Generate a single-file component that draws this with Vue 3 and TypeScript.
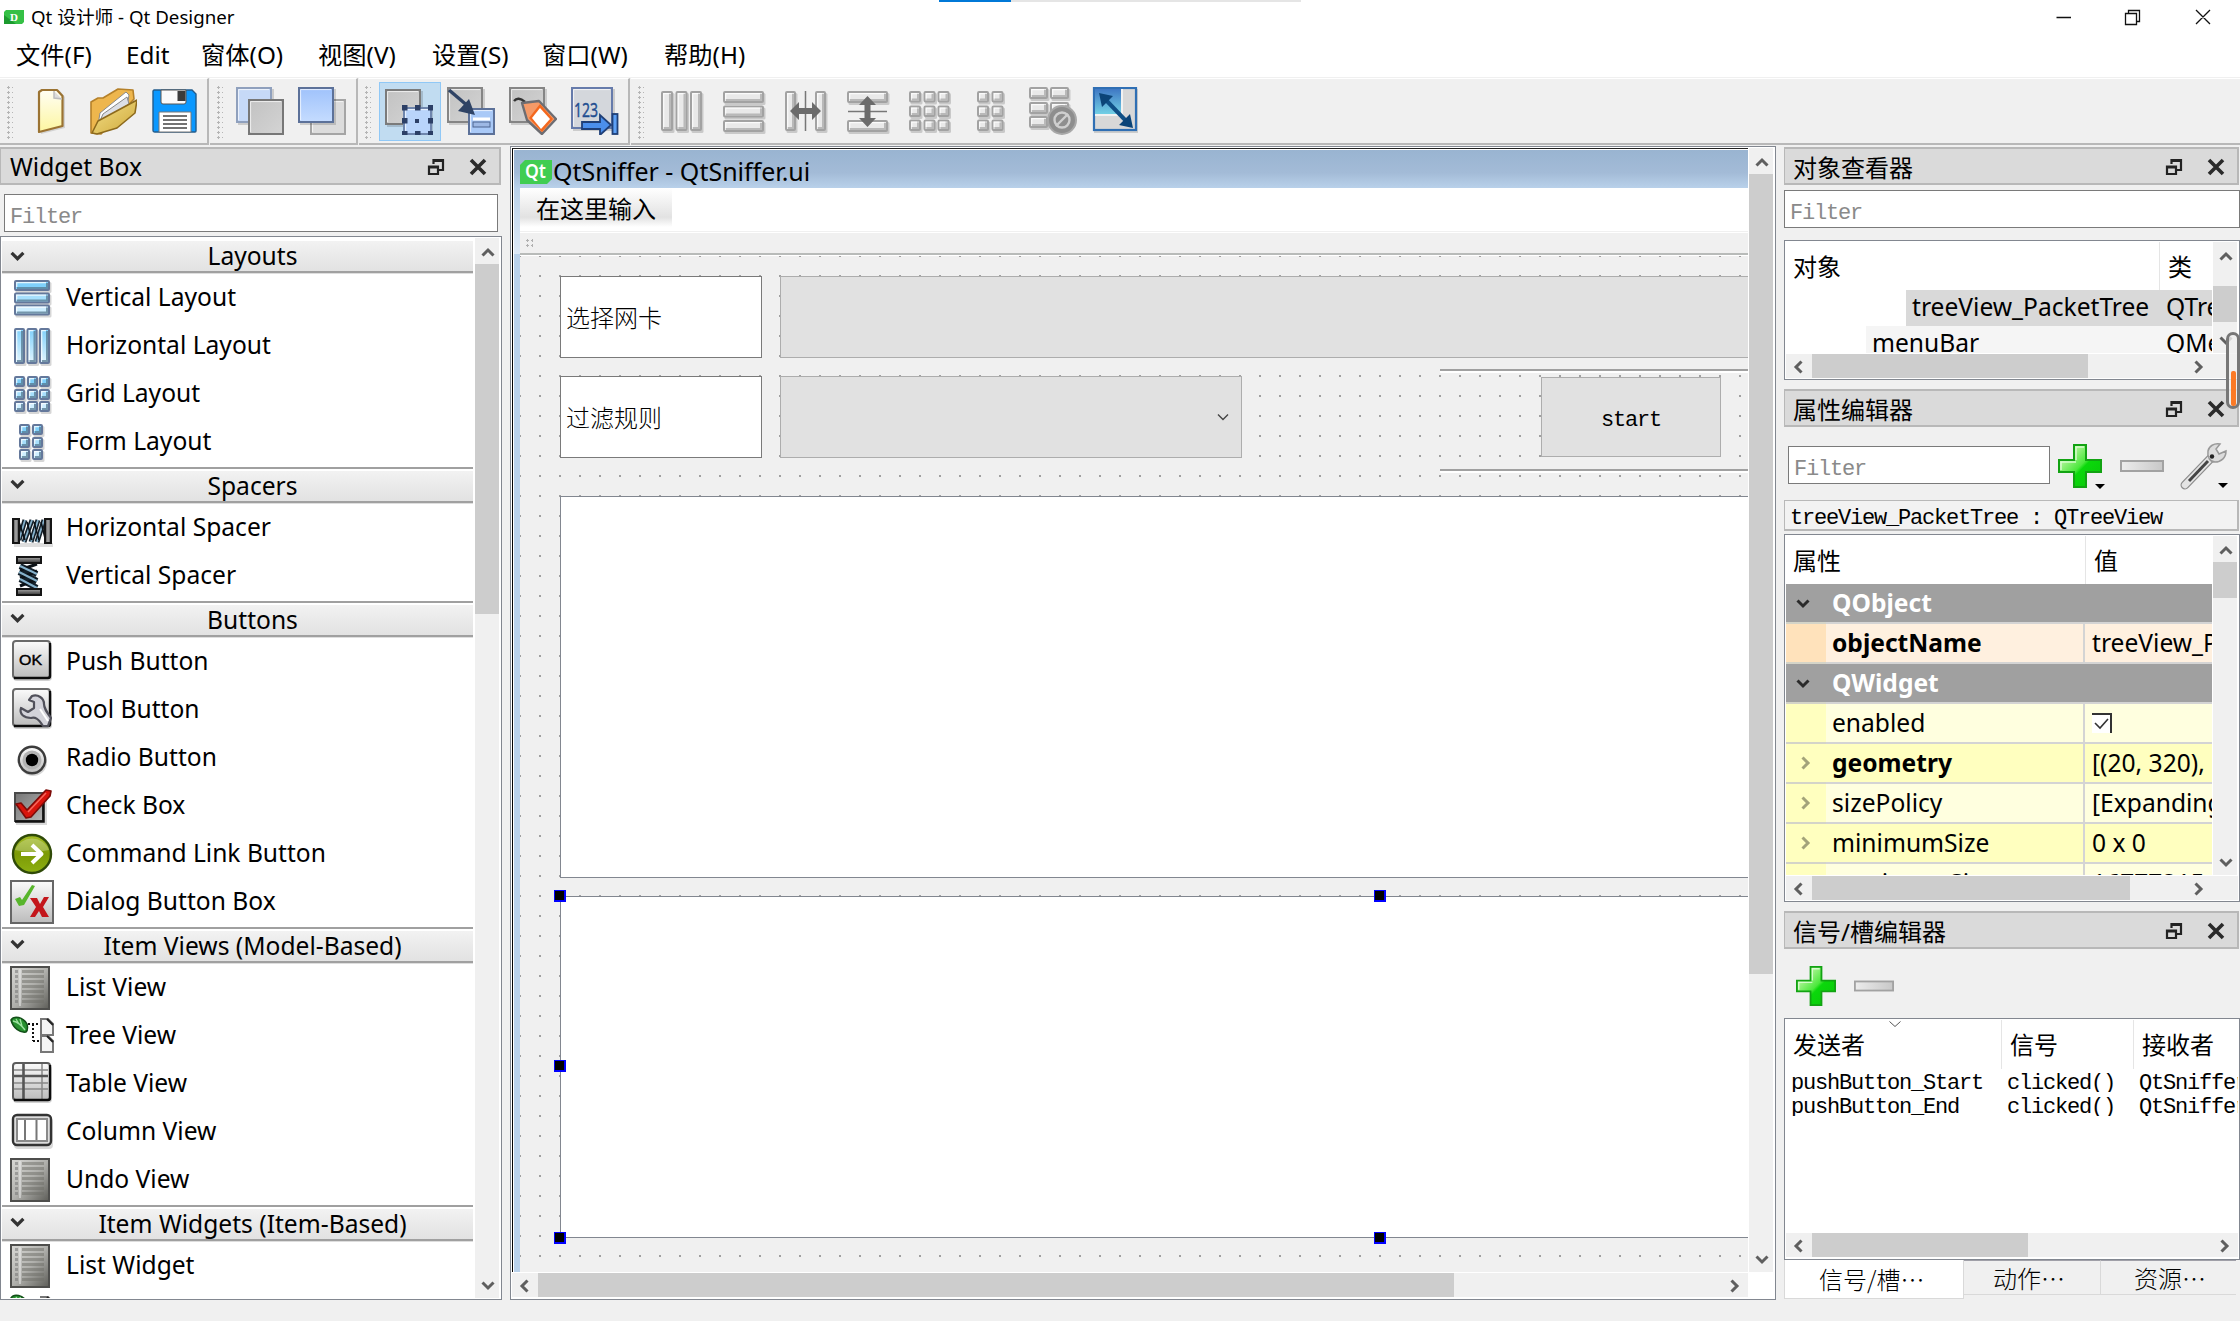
<script setup lang="ts">
import { h } from 'vue'

type Art = string

/* ---------- shared drawing helpers ---------- */
function cell(x: number, y: number, w: number, hh: number, fill: string, line: string, shade: string): Art {
  return `<rect x="${x + 1.5}" y="${y + 2}" width="${w}" height="${hh}" rx="1.5" fill="#000" opacity=".16"/>
<rect x="${x + 1}" y="${y + 1}" width="${w - 2}" height="${hh - 2}" rx="1" fill="${fill}" stroke="${line}" stroke-width="2"/>
<path d="M${x + 3} ${y + hh - 3}H${x + w - 3}V${y + 3}" fill="none" stroke="${shade}" stroke-width="2" opacity=".75"/>
<path d="M${x + 2.7} ${y + hh - 4}V${y + 2.7}H${x + w - 4}" fill="none" stroke="#fff" stroke-width="1.2" opacity=".8"/>`
}
const blue = ['#7fd0fb', '#a6dffc', '#cdeeff']
const bc = (x: number, y: number, w: number, hh: number, f: string) => cell(x, y, w, hh, f, '#64789b', '#55788f')
const gc = (x: number, y: number, w: number, hh: number) => cell(x, y, w, hh, '#e9e9e9', '#a2a2a2', '#a8a8a8')

const grid3 = (x0: number[], f: (x: number, y: number, i: number) => Art, y0: number[]) =>
  y0.map((y, i) => x0.map((x) => f(x, y, i)).join('')).join('')

const plate = (x: number, y: number, w: number, hh: number, fill: string, line: string) =>
  `<rect x="${x + 2}" y="${y + 2}" width="${w}" height="${hh}" fill="#000" opacity=".15"/>
<rect x="${x + 1}" y="${y + 1}" width="${w - 2}" height="${hh - 2}" fill="${fill}" stroke="${line}" stroke-width="2"/>
<path d="M${x + 2.6} ${y + hh - 3}V${y + 2.6}H${x + w - 3}" fill="none" stroke="#fff" opacity=".7"/>`

const listArt: Art = `<rect x="1" y="1" width="38" height="42" fill="url(#gList)" stroke="#4e4e4c" stroke-width="2"/>
${[5, 10, 15, 20, 25, 30, 35].map((y) => `<rect x="12" y="${y - 1}" width="22" height="3" fill="#6d6d68" opacity=".5"/><rect x="5" y="${y - 1}" width="3" height="3" fill="#777" opacity=".55"/>`).join('')}
<path d="M10 3V40" stroke="#eee" stroke-width="1.4" opacity=".7"/>`

const page = (y: number) => `<path d="M31 ${y}H38L43 ${y + 5}V${y + 16}H31Z" fill="#f4f4f4" stroke="#777" stroke-width="2"/><path d="M37 ${y}L43 ${y + 6}" stroke="#222" stroke-width="2"/>`
const treeArt: Art = `<path d="M1 6C4 1 13 3 17 10C18 14 18 16 16 18C10 19 3 14 1 6Z" fill="#27912f" stroke="#124f18" stroke-width="1.5"/>
<path d="M3 7C8 8 12 12 15 16M6 5L9 10M10 5L12 12" stroke="#9de2a0" stroke-width="1.3" fill="none"/>
<path d="M18 10H29M23 10V27M23 27H29" stroke="#111" stroke-width="2" stroke-dasharray="2 2" fill="none"/>${page(5)}${page(22)}`

const coil = `<path d="M9 34L15 14M14 36L22 14M21 36L28 14M27 36L34 14" stroke="#14212b" stroke-width="5"/><path d="M9 34L15 14M14 36L22 14M21 36L28 14M27 36L34 14" stroke="#86b2cc" stroke-width="1.8"/><path d="M9 16L15 34M17 16L22 34M24 16L29 34M31 16L35 32" stroke="#0c1217" stroke-width="1.6"/>`
const springArt: Art = `<rect x="4" y="37" width="39" height="4" fill="#000" opacity=".13"/>${coil}<rect x="3" y="13" width="6" height="24" fill="url(#gMet)" stroke="#151515" stroke-width="2"/><rect x="35" y="13" width="6" height="24" fill="url(#gMet)" stroke="#151515" stroke-width="2"/>`
const vspringArt: Art = `<path d="M10 12L27 20M9 18L27 27M10 25L27 34" stroke="#14212b" stroke-width="6"/><path d="M27 10L10 16M27 17L10 24M27 25L10 32" stroke="#0c1217" stroke-width="3"/><path d="M10 12L27 20M9 18L27 27M10 25L27 34" stroke="#86b2cc" stroke-width="2"/><rect x="7" y="3" width="24" height="6" fill="url(#gMetV)" stroke="#151515" stroke-width="2"/><rect x="7" y="35" width="24" height="6" fill="url(#gMetV)" stroke="#151515" stroke-width="2"/>`

const key = `<rect x="3" y="3" width="39" height="38" rx="4" fill="#000" opacity=".18"/><rect x="3" y="1" width="37" height="37" rx="3" fill="url(#gKey)" stroke="#6a6a6a" stroke-width="2"/><path d="M4 38H38Q40 38 40 36V3" fill="none" stroke="#0c0c0c" stroke-width="2.4"/>`

const art: Record<string, Art> = {
  vlay: [4, 16.5, 28.5].map((y, i) => bc(4, y, 36, 11, blue[i])).join(''),
  hlay: [4, 16.5, 29].map((x) => bc(x, 4, 11, 36, 'url(#gBlueV)')).join(''),
  glay: grid3([4, 17, 29], (x, y, i) => bc(x, y, 11, 11, blue[i]), [4, 17, 29]),
  flay: grid3([9, 22], (x, y, i) => bc(x, y, 11, 11, blue[i]), [4, 17, 29]),
  hspace: springArt,
  vspace: vspringArt,
  push: key + `<text x="20.5" y="25" font-size="14" font-family="Liberation Sans, sans-serif" text-anchor="middle" textLength="23" lengthAdjust="spacingAndGlyphs" fill="#000" stroke="#000" stroke-width=".4">OK</text>`,
  tool: key + `<path d="M22 8C28 6 34 10 34 16C34 20 36 23 41 30L38 38L33 38C28 30 25 29 21 30C14 30 9 26 11 20L18 24L24 20L24 14L19 12Z" fill="#d3d3da" stroke="#50505a" stroke-width="2.2" stroke-linejoin="round"/><path d="M30 21L38 33" stroke="#fff" stroke-width="2"/>`,
  radio: `<circle cx="23" cy="26" r="14" fill="#000" opacity=".16"/><circle cx="22" cy="24" r="13.2" fill="url(#gKey)" stroke="#3c3c3c" stroke-width="2.4"/><circle cx="22" cy="24" r="9.5" fill="#b3b3b3"/><circle cx="22" cy="24" r="6.2" fill="#000"/>`,
  check: `<rect x="6" y="11" width="31" height="30" fill="#000" opacity=".15"/><rect x="5" y="9" width="28" height="28" fill="url(#gDark)" stroke="#4a4a4a" stroke-width="2"/><path d="M5 37.5H33.500V14" fill="none" stroke="#111" stroke-width="2.500"/><path d="M6 20L11 19L17 26L36 6L41 7L40 12L21 33L16 34Z" fill="#d8140c" stroke="#7d0b08" stroke-width="1.6" stroke-linejoin="round"/><path d="M18 28L36 9" stroke="#f6675c" stroke-width="1.500"/>`,
  cmd: `<circle cx="22" cy="22" r="19" fill="url(#gGreen)" stroke="#2f4a08" stroke-width="2.4"/><path d="M5 18A18 17 0 0 1 39 18Q22 22 5 18Z" fill="#fff" opacity=".25"/><path d="M11 22H30M22 13L31.500 22L22 31" fill="none" stroke="#fff" stroke-width="4" stroke-linejoin="round"/>`,
  dlg: `<rect x="1" y="1" width="42" height="42" fill="url(#gKey)" stroke="#666" stroke-width="2"/><path d="M5 19L10 17L12 20L22 5L25 6L14 25L9 26Z" fill="#58b52c"/><path d="M20 18H27L30 24L34 17H39L33 27L39 37H32L29 31L25 37H20L26 27Z" fill="#c3161b"/>`,
  list: listArt,
  tree: treeArt,
  table: `<rect x="3" y="3" width="39" height="38" rx="4" fill="#000" opacity=".18"/><rect x="3" y="1" width="37" height="37" rx="3" fill="url(#gKey)" stroke="#5c5c5c" stroke-width="2"/><path d="M4 8H38M4 21H38M4 27H38M32 2V37" stroke="#888" stroke-width="1.500"/><path d="M4 14H38M13.500 2V37" stroke="#555" stroke-width="2.600"/><path d="M4 38H38Q40 38 40 36V3" fill="none" stroke="#0c0c0c" stroke-width="2.400"/>`,
  column: `<rect x="4" y="8" width="39" height="31" rx="4" fill="#000" opacity=".15"/><rect x="3" y="5" width="38" height="30" rx="4" fill="#ddd" stroke="#333" stroke-width="2.400"/><rect x="7" y="9" width="30" height="22" fill="#fff" stroke="#8a8a8a" stroke-width="2"/><path d="M15 10V30M26.500 10V30" stroke="#777" stroke-width="2"/>`,
}

const g = { f: 'url(#gPlate)', l: '#7d7d7d' }
const tb: Record<string, Art> = {
  fresh: `<path d="M13 4H33L38 10V41L14 47Z" fill="#000" opacity=".12"/><path d="M12 5L15 3H30L35.500 9V39L12 45Z" fill="url(#gPaper)" stroke="#9b7332" stroke-width="2.200" stroke-linejoin="round"/><path d="M27 4L27 11L35 12" fill="#ddd" stroke="#bdbdbd" stroke-width="1.500"/>`,
  open: `<path d="M2 15L9 11L14 11L29 2L44 3L45 12L12 47L2 46Z" fill="#eeb64d" stroke="#b5812a" stroke-width="1.600" stroke-linejoin="round"/><path d="M9 38L11 26L37 5L40 8L38 20L12 40Z" fill="#fff" stroke="#8b8b8b"/><path d="M10 36L14 27L38 10L40 17Z" fill="#dcdfe6" stroke="#888"/><path d="M3 46L9 34L48 13L46 26L28 41L8 47Z" fill="url(#gGold)" stroke="#8d6a1d" stroke-width="1.600" stroke-linejoin="round"/>`,
  save: `<path d="M3 3H41L45 7V44Q45 45 44 45H4Q2 45 2 43V4Z" fill="#0a98ff" stroke="#235c8c" stroke-width="1.400"/><path d="M10 3H35V15Q35 17 33 17H12Q10 17 10 15Z" fill="#fafafa" stroke="#555"/><rect x="26.500" y="4" width="8" height="10" fill="#3b3b3b"/><path d="M8 25H40V45H8Z" fill="#fff" stroke="#777"/><path d="M12 29H36M12 33H36M12 37H36M12 41H36" stroke="#444" stroke-width="1.500"/>`,
  lower: plate(0, 0, 36, 36, '#c6d9f7', '#8fa0bd') + plate(12, 12, 36, 36, g.f, '#777'),
  raise: plate(12, 12, 36, 36, '#dcdcdc', '#a5a5a5') + plate(0, 0, 36, 36, 'url(#gBlueP)', '#5c7199'),
  edit: plate(0, 2, 36, 36, g.f, '#7b7b7b') + plate(18, 20, 29, 28, '#b9d4fb', '#6f86ad') +
    [[16, 18], [29, 18], [42, 18], [16, 31], [42, 31], [16, 44], [29, 44], [42, 44]].map(([x, y]) => `<rect x="${x + 1}" y="${y}" width="5.500" height="5.500" fill="#2c3f66"/>`).join('') + `<rect x="30" y="32" width="4" height="4" fill="#2c3f66"/>`,
  signal: plate(0, 0, 36, 36, g.f, '#858585') + plate(21, 21, 27, 27, '#a9c9f7', '#5c7199') + `<path d="M26 32H43" stroke="#fff" stroke-width="3"/><rect x="26" y="35" width="17" height="5" fill="#9db8e4" stroke="#4d6490"/><path d="M2 3L22 20" stroke="#2f4365" stroke-width="3.400"/><path d="M28 28L11 24L22 12Z" fill="#2f4365"/>`,
  buddy: plate(0, 0, 36, 36, g.f, '#858585') + `<path d="M5 14Q9 9 16 15" fill="none" stroke="#333" stroke-width="2.400"/><path d="M13 16L30 14L47 32L33 47L18 33Z" fill="#f59a68" stroke="#6d6d72" stroke-width="2.400" stroke-linejoin="round"/><path d="M31 17L44 32L33 45L20 31Z" fill="#f4681e"/><path d="M31 21L41 32L32 42L23 31Z" fill="#fff"/>`,
  order: plate(0, 0, 42, 42, '#d4d7dc', '#667bab') + `<text x="3" y="30" font-size="20" font-family="Open Sans, sans-serif" textLength="24" lengthAdjust="spacingAndGlyphs" fill="#1f4e91" stroke="#1f4e91" stroke-width=".5">123</text><path d="M11 35H29V28L40 38L29 48V42H11Z" fill="#4b8fec" stroke="#1f3f77" stroke-width="1.800"/><rect x="41.500" y="27" width="5" height="20" fill="#5da0f5" stroke="#1f3f77" stroke-width="1.800"/>`,
  hl: [4, 18.500, 33].map((x) => gc(x, 4, 12, 40)).join(''),
  vl: [4, 18.500, 33].map((y) => gc(4, y, 41, 12)).join(''),
  hs: gc(4, 4, 11, 40) + gc(34, 4, 11, 40) + `<path d="M24.500 4V44" stroke="#777" stroke-width="1.500"/><path d="M9 24L18 15V21H31V15L40 24L31 33V27H18V33Z" fill="#6b6b6b"/>`,
  vs: gc(4, 4, 41, 12) + gc(4, 33, 41, 12) + `<path d="M5 24.500H44" stroke="#777" stroke-width="1.500"/><path d="M24.500 9L33 18H27.500V31H33L24.500 40L16 31H21.500V18H16Z" fill="#6b6b6b"/>`,
  gr: grid3([4, 18.500, 32.500], (x, y) => gc(x, y, 12, 11.500), [4, 18.500, 32.500]),
  fm: grid3([10, 24.500], (x, y) => gc(x, y, 12, 11.500), [4, 18.500, 32.500]),
  brk: gc(0, 0, 19, 12) + gc(21, 0, 19, 12) + gc(0, 15, 19, 12) + gc(21, 15, 19, 12) + gc(0, 29, 19, 12) + `<circle cx="33" cy="33" r="14" fill="#8e8e8e" stroke="#a8a8a8" stroke-width="2"/><circle cx="33" cy="33" r="7.500" fill="none" stroke="#cfcfcf" stroke-width="2.400"/><path d="M27 39L39 27" stroke="#cfcfcf" stroke-width="2.400"/>`,
  adj: `<rect x="3" y="2" width="44" height="44" fill="#000" opacity=".15"/><rect x="3" y="1" width="42" height="42" fill="#d8d8d8" stroke="#2f6fb4" stroke-width="2.200"/><rect x="4" y="2" width="27" height="26" fill="url(#gSky)"/><path d="M31 2V28H4" fill="none" stroke="#f2f2f2" stroke-width="2"/><path d="M13 11L37 36" stroke="#0f4f86" stroke-width="4"/><path d="M8 6L22 9L11 20Z M42 41L28 38L39 27Z" fill="#0b4478"/>`,
}

interface Section { title: string; items: [string, string][] }
const sections: Section[] = [
  { title: 'Layouts', items: [['vlay', 'Vertical Layout'], ['hlay', 'Horizontal Layout'], ['glay', 'Grid Layout'], ['flay', 'Form Layout']] },
  { title: 'Spacers', items: [['hspace', 'Horizontal Spacer'], ['vspace', 'Vertical Spacer']] },
  { title: 'Buttons', items: [['push', 'Push Button'], ['tool', 'Tool Button'], ['radio', 'Radio Button'], ['check', 'Check Box'], ['cmd', 'Command Link Button'], ['dlg', 'Dialog Button Box']] },
  { title: 'Item Views (Model-Based)', items: [['list', 'List View'], ['tree', 'Tree View'], ['table', 'Table View'], ['column', 'Column View'], ['list', 'Undo View']] },
  { title: 'Item Widgets (Item-Based)', items: [['list', 'List Widget'], ['tree', '']] },
]

const menus = ['文件(F)', 'Edit', '窗体(O)', '视图(V)', '设置(S)', '窗口(W)', '帮助(H)']
const toolbars = [
  { cls: 'b1', icons: ['fresh', 'open', 'save'] },
  { cls: 'b2', icons: ['lower', 'raise'] },
  { cls: 'b3', icons: ['edit', 'signal', 'buddy', 'order'] },
  { cls: 'b4', icons: ['hl', 'vl', 'hs', 'vs', 'gr', 'fm', 'brk', 'adj'] },
]

const props = [
  { kind: 'group', name: 'QObject', value: '' },
  { kind: 'peach', name: 'objectName', value: 'treeView_PacketTree', bold: true },
  { kind: 'group', name: 'QWidget', value: '' },
  { kind: 'light', name: 'enabled', value: '', box: true },
  { kind: 'deep', name: 'geometry', value: '[(20, 320),', bold: true, more: true },
  { kind: 'light', name: 'sizePolicy', value: '[Expanding, Expanding]', more: true },
  { kind: 'deep', name: 'minimumSize', value: '0 x 0', more: true },
  { kind: 'light', name: 'maximumSize', value: '16777215 x 16777215', more: false },
]

const plus = `<path d="M16 1H28V16H43V28H28V43H16V28H1V16H16Z" fill="url(#gPlus)" stroke="#12a312" stroke-width="2"/><path d="M18 16V3H26M3 26V18H18" fill="none" stroke="#e6ffe0" stroke-width="1.500" opacity=".8"/>`

/* ---------- small render helpers ---------- */
const chevrons: Record<string, string> = {
  up: 'M1.500 9.500L7 4L12.500 9.500', down: 'M1.500 4.500L7 10L12.500 4.500',
  left: 'M9.500 1.500L4 7L9.500 12.500', right: 'M4.500 1.500L10 7L4.500 12.500',
}
const Chev = (p: { d: string }) =>
  h('svg', { class: 'chev', viewBox: '0 0 14 14' }, [h('path', { d: chevrons[p.d] })])
Chev.props = ['d']

const Bar = (p: { dir: string; at: number; len: number }) => {
  const v = p.dir === 'v'
  return h('div', { class: ['sbar', p.dir] }, [
    h('span', { class: 'end first' }, [Chev({ d: v ? 'up' : 'left' })]),
    h('span', { class: 'track' }, [
      h('span', { class: 'thumb', style: v ? { marginTop: p.at + 'px', height: p.len + 'px' } : { marginLeft: p.at + 'px', width: p.len + 'px' } }),
    ]),
    h('span', { class: 'end last' }, [Chev({ d: v ? 'down' : 'right' })]),
  ])
}
Bar.props = ['dir', 'at', 'len']

const Cap = (p: { text: string }) =>
  h('div', { class: 'cap' }, [
    h('span', { class: 'captext' }, p.text),
    h('svg', { class: 'capbtn', viewBox: '0 0 18 18' }, [h('path', { d: 'M6.500 6V2H16V12H12M6 3H16M2 8.500H11V16H2ZM2 9.500H11', fill: 'none', stroke: '#222', 'stroke-width': 2.2 })]),
    h('svg', { class: 'capbtn', viewBox: '0 0 18 18' }, [h('path', { d: 'M2 2L16 16M16 2L2 16', fill: 'none', stroke: '#2a2a2a', 'stroke-width': 3.6 })]),
  ])
Cap.props = ['text']
</script>

<template>
  <div class="app">
    <svg class="defs" width="0" height="0">
      <defs>
        <linearGradient id="gBlueV" x2="0" y2="1"><stop stop-color="#7fd0fb" /><stop offset="1" stop-color="#e2f5ff" /></linearGradient>
        <linearGradient id="gMet"><stop stop-color="#444" /><stop offset=".5" stop-color="#aaa" /><stop offset="1" stop-color="#444" /></linearGradient>
        <linearGradient id="gMetV" x2="0" y2="1"><stop stop-color="#aaa" /><stop offset="1" stop-color="#333" /></linearGradient>
        <linearGradient id="gKey" x2="0" y2="1"><stop stop-color="#fbfbfb" /><stop offset="1" stop-color="#bcbcbc" /></linearGradient>
        <linearGradient id="gDark" x2="1" y2="1"><stop stop-color="#757575" /><stop offset="1" stop-color="#b5b5b5" /></linearGradient>
        <linearGradient id="gList" x2="1" y2="1"><stop stop-color="#d9d9d6" /><stop offset=".5" stop-color="#b0b0ac" /><stop offset="1" stop-color="#5d5d58" /></linearGradient>
        <linearGradient id="gGreen" x2="0" y2="1"><stop stop-color="#a5bd28" /><stop offset=".5" stop-color="#7c9a06" /><stop offset="1" stop-color="#8db012" /></linearGradient>
        <linearGradient id="gPlate" x2="1" y2="1"><stop stop-color="#c2c2c2" /><stop offset="1" stop-color="#d4d4d4" /></linearGradient>
        <linearGradient id="gBlueP" x2="0" y2="1"><stop stop-color="#9fc2fb" /><stop offset="1" stop-color="#c5dcff" /></linearGradient>
        <linearGradient id="gPaper" x2="0" y2="1"><stop stop-color="#fffef4" /><stop offset="1" stop-color="#fdf6a0" /></linearGradient>
        <linearGradient id="gGold" x2="1" y2="1"><stop stop-color="#f4e08a" /><stop offset="1" stop-color="#cfa93a" /></linearGradient>
        <linearGradient id="gSky" x2="0" y2="1"><stop stop-color="#3f78c4" /><stop offset="1" stop-color="#74d3e6" /></linearGradient>
        <linearGradient id="gPlus" x2="1" y2="1"><stop offset=".2" stop-color="#b5f59c" /><stop offset=".5" stop-color="#4be83c" /><stop offset=".56" stop-color="#0bd80b" /><stop offset="1" stop-color="#0ac40a" /></linearGradient>
        <linearGradient id="gMinus"><stop stop-color="#ececec" /><stop offset="1" stop-color="#c8c8c8" /></linearGradient>
      </defs>
    </svg>

    <header class="titlebar">
      <svg class="appicon" viewBox="0 0 20 14">
        <path d="M2 0H20V12L18 14H0V2Z" fill="#35c045" /><path d="M0 5L12 14H0Z" fill="#1c9a2e" />
        <text x="10" y="11" font-size="11" font-weight="700" font-family="Liberation Serif, serif" text-anchor="middle" fill="#fff">D</text>
      </svg>
      <span class="apptitle">Qt 设计师 - Qt Designer</span>
      <svg class="winbtns" viewBox="0 0 170 34"><path d="M8.500 17.500H23M77.500 13.500H88.500V24.500H77.500ZM80.500 13.500V10.500H91.500V21.500H88.500M148 10L162 24M162 10L148 24" fill="none" stroke="#111" stroke-width="1.300" /></svg>
      <div class="progress"><i></i></div>
    </header>

    <nav class="menubar"><span v-for="m in menus" :key="m">{{ m }}</span></nav>

    <div class="toolbars">
      <div v-for="t in toolbars" :key="t.cls" class="toolbar" :class="t.cls">
        <i class="grip"></i>
        <span v-for="n in t.icons" :key="n" class="tbtn" :class="{ on: n === 'edit' }"><svg viewBox="0 0 48 48" v-html="tb[n]"></svg></span>
      </div>
    </div>

    <main class="body">
      <section class="left">
        <Cap text="Widget Box" />
        <div class="filter fl">Filter</div>
        <div class="frame tree">
          <div class="wlist">
            <template v-for="s in sections" :key="s.title">
              <div class="sect"><Chev d="down" /><span>{{ s.title }}</span></div>
              <div v-for="it in s.items" :key="it[1]" class="witem">
                <svg viewBox="0 0 44 44" v-html="art[it[0]]"></svg><span>{{ it[1] }}</span>
              </div>
            </template>
          </div>
          <Bar dir="v" :at="0" :len="350" />
        </div>
      </section>

      <section class="frame center">
        <div class="ctop">
          <div class="win">
            <div class="wtitle">
              <svg viewBox="0 0 32 24"><path d="M5 0H32V19L27 24H0V5Z" fill="#41cd52" /><text x="15.500" y="18" font-size="19" font-weight="600" font-family="Noto Sans, sans-serif" text-anchor="middle" textLength="21" lengthAdjust="spacingAndGlyphs" fill="#fff">Qt</text></svg>
              <span>QtSniffer - QtSniffer.ui</span>
            </div>
            <div class="wrest">
              <div class="wside"></div>
              <div class="wmain">
                <div class="wmenu"><span>在这里输入</span></div>
                <div class="wtool"><i></i></div>
                <div class="form">
                  <div class="w edit e1">选择网卡</div>
                  <div class="w combo c1"></div>
                  <div class="w edit e2">过滤规则</div>
                  <div class="w combo c2"><svg viewBox="0 0 14 14"><path d="M2 4.500L7 9.500L12 4.500" fill="none" stroke="#444" stroke-width="1.400" /></svg></div>
                  <div class="w hline l1"></div>
                  <div class="w hline l2"></div>
                  <div class="w start">start</div>
                  <div class="w view v1"></div>
                  <div class="w view v2"></div>
                  <i class="hd h1"></i><i class="hd h2"></i><i class="hd h3"></i><i class="hd h4"></i><i class="hd h5"></i>
                </div>
              </div>
            </div>
          </div>
          <Bar dir="v" :at="0" :len="800" />
        </div>
        <Bar dir="h" :at="0" :len="916" />
      </section>

      <section class="right">
        <Cap text="对象查看器" />
        <div class="filter fo">Filter</div>
        <div class="frame objs">
          <div class="orow">
            <div class="otable">
              <div class="head"><span class="oc1">对象</span><span>类</span></div>
              <div class="or sel"><span class="oname">treeView_PacketTree</span><span>QTreeView</span></div>
              <div class="or alt"><span class="oname">menuBar</span><span>QMenuBar</span></div>
            </div>
            <Bar dir="v" :at="18" :len="36" />
          </div>
          <Bar class="short" dir="h" :at="0" :len="276" />
        </div>
        <Cap class="cprop" text="属性编辑器" />
        <div class="ptools">
          <div class="filter fp">Filter</div>
          <svg class="pi" viewBox="0 0 48 48"><g v-html="plus"></g><path d="M37 40H47L42 45Z" fill="#000" /></svg>
          <svg class="mi" viewBox="0 0 44 12"><rect x="1" y="1" width="42" height="10" fill="url(#gMinus)" stroke="#a2a2a2" stroke-width="2" /></svg>
          <svg class="wr" viewBox="0 0 50 50">
            <path d="M6 43L33 15" stroke="#8c8c8c" stroke-width="9" stroke-linecap="round" /><path d="M6 43L33 15" stroke="#e4e4e4" stroke-width="6.500" stroke-linecap="round" />
            <path d="M10 39L29 19" stroke="#444" stroke-width="3" />
            <path d="M29 9C30 4 35 1 41 2L37 7L40 12L47 9C47 16 42 20 36 20C31 20 28 15 29 9Z" fill="#dcdcdc" stroke="#999" stroke-width="1.500" /><circle cx="33" cy="14.500" r="2.200" fill="#222" />
            <path d="M39 41H49L44 46Z" fill="#000" />
          </svg>
        </div>
        <div class="objline">treeView_PacketTree : QTreeView</div>
        <div class="frame ptable">
          <div class="orow">
            <div class="pcol">
              <div class="head"><span class="pc1">属性</span><span>值</span></div>
              <div v-for="p in props" :key="p.name" class="prow" :class="[p.kind, { b: p.bold }]">
                <span class="pexp"><Chev v-if="p.kind === 'group'" d="down" /><Chev v-else-if="p.more" d="right" /></span>
                <span class="pname">{{ p.name }}</span>
                <span class="pval"><svg v-if="p.box" class="cb" viewBox="0 0 20 20"><rect width="20" height="20" fill="#fff" /><path d="M0 1H19V20" fill="none" stroke="#333" stroke-width="2" /><path d="M3 10L8 15L16 6" fill="none" stroke="#333" stroke-width="1.600" /></svg>{{ p.value }}</span>
              </div>
            </div>
            <Bar dir="v" :at="0" :len="36" />
          </div>
          <Bar class="short" dir="h" :at="0" :len="318" />
        </div>
        <Cap class="csig" text="信号/槽编辑器" />
        <div class="stools">
          <svg class="sp" viewBox="0 0 44 44" v-html="plus"></svg>
          <svg class="sm" viewBox="0 0 44 12"><rect x="1" y="1" width="42" height="10" fill="url(#gMinus)" stroke="#a2a2a2" stroke-width="2" /></svg>
        </div>
        <div class="frame sigs">
          <div class="shead"><span>发送者<svg viewBox="0 0 12 6"><path d="M.5 .5L6 5.500L11.500 .5" fill="none" stroke="#555" /></svg></span><span>信号</span><span>接收者</span></div>
          <div class="srow"><span>pushButton_Start</span><span>clicked()</span><span>QtSniffer</span></div>
          <div class="srow"><span>pushButton_End</span><span>clicked()</span><span>QtSniffer</span></div>
          <div class="fill"></div>
          <Bar dir="h" :at="0" :len="216" />
        </div>
        <div class="tabs"><span class="t1">信号/槽…</span><span class="t2">动作…</span><span class="t3">资源…</span></div>
        <div class="pill"><i></i></div>
      </section>
    </main>
  </div>
</template>

<style>
body { background: #f0f0f0; }
.chev { width: 14px; height: 14px; display: block; }
.chev path { fill: none; stroke: #5f5f5f; stroke-width: 3; }
.sbar { display: flex; background: #f0f0f0; flex: none; }
.sbar .end { width: 26px; height: 24px; display: flex; align-items: center; justify-content: center; }
.sbar .track { flex: 1; }
.sbar .thumb { display: block; background: #cdcdcd; }
.sbar.v { flex-direction: column; width: 24px; }
.sbar.v .end { width: 24px; height: 26px; box-sizing: border-box; padding-left: 1px; }
.sbar.v .first { padding-top: 3px; }
.sbar.h { height: 24px; }
.sbar.h .end { padding-top: 1px; box-sizing: border-box; }
.sbar.h .last { padding-right: 2px; }
.sbar.h .thumb { height: 24px; }
.sbar.h.short { padding-right: 26px; }
.cap { height: 38px; box-sizing: border-box; border: 2px solid #b8b8b8; border-left-width: 1px; background: #dadada; display: flex; align-items: center; padding: 2px 13px 0 9px; }
.cap .captext { flex: 1; line-height: 34px; }
.cap .capbtn { width: 18px; height: 18px; margin-left: 24px; }
</style>

<style scoped>
.app { width: 2240px; height: 1321px; overflow: hidden; background: #f0f0f0; display: flex; flex-direction: column; font-family: "Noto Sans", "Noto Sans CJK SC", sans-serif; font-size: 24.6px; color: #000; white-space: nowrap; position: relative; }
.defs { position: absolute; }
.titlebar { height: 34px; background: #fff; display: flex; align-items: center; padding-left: 4px; position: relative; flex: none; }
.appicon { width: 20px; height: 14px; }
.apptitle { margin-left: 7px; font-size: 18.700px; line-height: 34px; flex: 1; }
.winbtns { width: 170px; height: 34px; margin-right: 22px; }
.progress { position: absolute; left: 939px; top: 0; width: 362px; height: 2px; background: #e5e5e5; }
.progress i { display: block; width: 72px; height: 2px; background: #0078d7; }
.menubar { height: 43px; background: #fff; display: grid; grid-template-columns: 110px 75px 117px 114px 110px 122px 120px; padding-left: 16px; line-height: 42px; font-size: 24.300px; flex: none; }
.toolbars { display: flex; height: 68px; flex: none; border-top: 1px solid #f0f0f0; box-sizing: border-box; }
.toolbar { box-sizing: border-box; border-top: 1px solid #fff; border-right: 2px solid #b8b8b8; border-bottom: 2px solid #b8b8b8; display: flex; padding-top: 3px; margin-right: 1px; }
.b1 { width: 209px; padding-left: 6px; }
.b2 { width: 148px; padding-left: 6px; }
.b3 { width: 271px; padding-left: 5px; }
.b4 { flex: 1; margin-right: 0; border-right: 0; padding-left: 6px; }
.grip { width: 7px; height: 54px; margin-top: 3px; margin-right: 6px; background: radial-gradient(circle, #b5b5b5 1px, transparent 1.400px) 0 0 / 5px 5px; flex: none; }
.b3 .grip { margin-right: 8px; }
.tbtn { width: 62px; height: 59px; box-sizing: border-box; display: flex; align-items: center; justify-content: center; border: 1px solid transparent; padding: 0 1px 1px 0; }
.b3 .tbtn { padding-right: 2px; }
.b1 .tbtn { padding: 0 0 1px 1px; }
.tbtn.on { background: #c1dcf1; border-color: #90c8f6; }
.tbtn svg { width: 48px; height: 48px; flex: none; }
.body { display: flex; height: 1155px; gap: 8px; flex: none; }
.left { width: 502px; padding-top: 2px; box-sizing: border-box; display: flex; flex-direction: column; }
.left .cap { margin-right: 1px; padding-right: 12px; flex: none; }
.filter { box-sizing: border-box; height: 38px; border: 1px solid #7a7a7a; background: #fff; padding-left: 5px; font: 22px/45px "Liberation Mono", monospace; letter-spacing: -1.200px; color: #8a8a8a; overflow: hidden; flex: none; }
.fl { margin: 9px 4px 4px 4px; }
.frame { box-sizing: border-box; border: 1px solid #828790; background: #fff; overflow: hidden; }
.tree { flex: 1; display: flex; padding: 1px 2px 1px 1px; gap: 2px; }
.wlist { flex: 1; overflow: hidden; }
.sect { height: 38px; box-sizing: border-box; position: relative; display: flex; justify-content: center; padding: 0 0 0 30px; line-height: 39px; background: linear-gradient(#a0a0a0, #a0a0a0) 0 1px / 100% 2px no-repeat, linear-gradient(#a0a0a0, #a0a0a0) 0 35px / 100% 2px no-repeat, linear-gradient(#dedede, #dedede) 0 37px / 100% 1px no-repeat, linear-gradient(#f2f2f2, #e2e2e2) 0 5px / 100% 30px no-repeat; }
.sect:first-child { height: 36px; line-height: 35px; background-position: 0 -5px, 0 33px, 0 35px, 0 3px; }
.sect :deep(.chev) { position: absolute; left: 8px; top: 10px; width: 15px; height: 15px; }
.sect :deep(.chev path) { stroke: #333; }
.witem { height: 48px; display: flex; align-items: center; padding-left: 8px; }
.witem svg { width: 44px; height: 44px; flex: none; }
.witem span { line-height: 45px; padding-bottom: 3px; margin-left: 12px; }
.center { width: 1266px; margin-top: 1px; display: flex; flex-direction: column; padding: 1px; }
.ctop { height: 1124px; display: flex; background: #fff; }
.win { width: 1236px; height: 1124px; box-sizing: border-box; border-left: 1px solid #000; border-top: 1px solid #222; padding: 1px 0 0 1px; display: flex; flex-direction: column; margin-right: 1px; overflow: hidden; }
.wtitle { height: 38px; background: linear-gradient(#99b4d1, #a3bbd7 60%, #b9d1ea); display: flex; align-items: center; padding-left: 6px; flex: none; }
.wtitle svg { width: 32px; height: 24px; margin-top: 6px; }
.wtitle span { margin-left: 1px; padding-top: 4px; line-height: 34px; font-size: 25px; }
.wrest { display: flex; flex: 1; min-height: 0; }
.wside { width: 6px; background: linear-gradient(#b9d1ea, #dce8f5) 0 0 / 6px 66px no-repeat #b9d1ea; }
.wmain { flex: 1; display: flex; flex-direction: column; min-width: 0; }
.wmenu { height: 43px; background: #fff; flex: none; }
.wmenu span { display: block; width: 152px; height: 39px; box-sizing: border-box; padding-left: 16px; line-height: 41px; font-size: 24px; background: linear-gradient(#fff, #e2e2e2 75%, #fff); }
.wtool { height: 24px; box-sizing: border-box; border-top: 1px solid #f0f0f0; border-bottom: 2px solid #b8bbb9; background: #f0f0f0; box-shadow: inset 0 1px #fff; padding: 6px 5px; flex: none; }
.wtool i { display: block; width: 8px; height: 11px; background: radial-gradient(circle, #b0b0b0 1px, transparent 1.400px) 0 0 / 5px 5px; }
.form { flex: 1; position: relative; overflow: hidden; margin-top: 1px; background: conic-gradient(from 90deg at 18px 18px, #a0a0a0 90deg, transparent 0) -19px -19px / 20px 20px #f0f0f0; }
.w { position: absolute; box-sizing: border-box; }
.edit { left: 40px; width: 202px; height: 82px; border: 1px solid #7a7a7a; background: #fff; padding-left: 5px; line-height: 80px; font-size: 24px; font-weight: 300; font-family: "Noto Sans CJK SC", sans-serif; }
.e1 { top: 20px; }
.e2 { top: 120px; }
.combo { left: 260px; height: 82px; border: 1px solid #adadad; background: #e1e1e1; }
.c1 { top: 20px; width: 1000px; }
.c2 { top: 120px; width: 462px; display: flex; align-items: center; justify-content: flex-end; padding-right: 11px; }
.c2 svg { width: 14px; height: 14px; }
.hline { left: 920px; width: 400px; height: 4px; background: #fff; border-top: 2px solid #a0a0a0; }
.l1 { top: 113px; }
.l2 { top: 213px; }
.start { left: 1021px; top: 121px; width: 180px; height: 80px; border: 1px solid #adadad; background: #e1e1e1; text-align: center; font: 22px/85px "Liberation Mono", monospace; letter-spacing: -1.200px; }
.view { left: 40px; width: 1300px; background: #fff; border: 1px solid #828790; }
.v1 { top: 240px; height: 382px; }
.v2 { top: 640px; height: 342px; }
.hd { position: absolute; width: 12px; height: 12px; box-sizing: border-box; background: #000; border-style: solid; border-color: #00f; border-width: 1px 2px 2px 1px; }
.h1 { left: 34px; top: 634px; }
.h2 { left: 34px; top: 804px; }
.h3 { left: 34px; top: 976px; }
.h4 { left: 854px; top: 634px; }
.h5 { left: 854px; top: 976px; }
.center > .sbar { margin: 1px 26px 0 0; }
.right { width: 456px; padding-top: 2px; box-sizing: border-box; display: flex; flex-direction: column; position: relative; }
.right .cap { margin-right: 1px; flex: none; padding: 2px 12px 0 8px; }
.right :deep(.captext) { font-size: 24px; line-height: 35px; padding-top: 1px; }
.fo { margin-top: 5px; }
.objs { margin-top: 12px; height: 140px; padding: 1px; display: flex; flex-direction: column; flex: none; }
.orow { display: flex; flex: 1; min-height: 0; padding-bottom: 1px; background: #fff; padding-right: 1px; justify-content: space-between; }
.otable, .pcol { width: 426px; overflow: hidden; }
.head { height: 48px; display: flex; line-height: 49px; font-size: 24px; padding-left: 7px; }
.head span + span { border-left: 1px solid #e5e5e5; padding-left: 8px; flex: 1; }
.oc1 { width: 366px; flex: none; }
.pc1 { width: 292px; flex: none; }
.or { display: flex; height: 36px; line-height: 34px; padding-left: 6px; }
.or span { flex: none; }
.or.sel { margin-left: 120px; background: #d9d9d9; }
.or.sel .oname { width: 254px; }
.or.alt { margin-left: 80px; background: #f5f5f5; }
.or.alt .oname { width: 294px; }
.cprop { margin-top: 9px; }
.ptools { display: flex; align-items: flex-start; height: 73px; padding: 15px 0 0 4px; box-sizing: border-box; flex: none; }
.fp { width: 262px; margin-top: 4px; }
.pi { width: 48px; height: 48px; margin: 2px 0 0 8px; }
.mi { width: 44px; height: 12px; margin: 18px 0 0 14px; }
.wr { width: 50px; height: 50px; margin: 0 0 0 15px; }
.objline { height: 31px; box-sizing: border-box; border: 1px solid #b8b8b8; border-bottom-width: 2px; border-right-width: 2px; background: #f2f2f2; margin-right: 1px; padding-left: 5px; font: 22px/36px "Liberation Mono", monospace; letter-spacing: -1.200px; flex: none; }
.ptable { margin-top: 3px; height: 368px; padding: 1px; display: flex; flex-direction: column; flex: none; }
.prow { height: 40px; display: flex; line-height: 38px; box-sizing: border-box; background: #ffffdf; }
.prow > span { box-sizing: border-box; height: 40px; border-bottom: 2px solid #d4d4d4; }
.prow > .pexp { width: 40px; flex: none; display: flex; align-items: center; padding-left: 12px; background: #ffffbf; border-bottom-color: #d4d4c8; }
.pexp :deep(.chev path) { stroke: #a3a37a; }
.pname { width: 259px; flex: none; padding-left: 6px; border-right: 2px solid #d4d4d4; }
.pval { flex: 1; padding-left: 7px; overflow: hidden; display: flex; align-items: center; }
.cb { width: 20px; height: 20px; }
.deep { background: #ffffbf; }
.peach { background: #fff0df; }
.prow.peach > .pexp { background: #ffe2bb; }
.group { background: #a0a0a0; color: #fff; font-weight: 700; }
.prow.group > .pexp { background: none; padding-left: 10px; }
.group .pexp :deep(.chev path) { stroke: #2a2a2a; }
.group .pname { border-right: 0; }
.b .pname { font-weight: 700; }
.csig { margin-top: 9px; }
.stools { height: 69px; padding-left: 12px; display: flex; align-items: flex-start; flex: none; box-sizing: border-box; }
.sp { width: 40px; height: 40px; margin-top: 17px; }
.sm { width: 40px; height: 12px; margin: 31px 0 0 18px; }
.sigs { height: 242px; padding: 1px; display: flex; flex-direction: column; flex: none; }
.shead, .srow { display: grid; grid-template-columns: 215px 132px 1fr; }
.shead { height: 48px; line-height: 49px; font-size: 24px; }
.shead span { padding-left: 8px; position: relative; }
.shead span:first-child { padding-left: 7px; }
.shead span + span { border-left: 1px solid #e5e5e5; }
.shead svg { position: absolute; left: 103px; top: 1px; width: 12px; height: 6px; }
.srow { height: 24px; padding-left: 5px; font: 22px/31px "Liberation Mono", monospace; letter-spacing: -1.200px; overflow: hidden; }
.srow span + span { padding-left: 1px; }
.fill { flex: 1; }
.sigs .sbar { margin-bottom: 1px; }
.tabs { display: flex; align-items: flex-start; height: 39px; font: 300 24px/34px "Noto Sans CJK SC", sans-serif; flex: none; }
.tabs span { box-sizing: border-box; height: 35px; border-bottom: 1px solid #d9d9d9; border-right: 1px solid #d9d9d9; border-top: 1px solid #a0a0a8; }
.tabs .t1 { width: 180px; height: 39px; background: #fff; border-left: 1px solid #d9d9d9; border-top: 0; padding-left: 34px; line-height: 37px; }
.tabs .t2 { width: 137px; padding-left: 29px; }
.tabs .t3 { width: 135px; padding-left: 33px; border-right: 0; }
.pill { position: absolute; left: 442px; top: 187px; width: 14px; height: 77px; box-sizing: border-box; border: 3px solid #777; border-radius: 7px; background: rgba(240, 240, 240, .8); padding: 36px 1px 0 2px; }
.pill i { display: block; width: 5px; height: 35px; border-radius: 2px; background: #fb7a26; }
</style>
